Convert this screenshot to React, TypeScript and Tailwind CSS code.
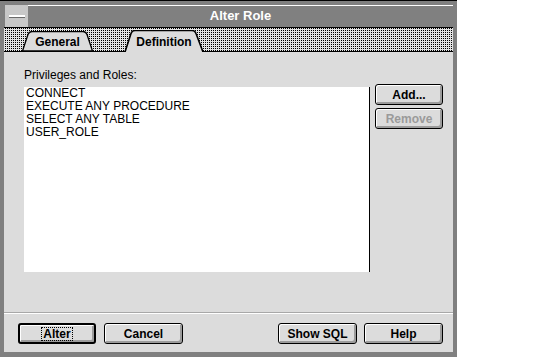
import React from "react";

const items = ["CONNECT", "EXECUTE ANY PROCEDURE", "SELECT ANY TABLE", "USER_ROLE"];

function Btn({
  label,
  w,
  disabled,
  isDefault,
}: {
  label: string;
  w: string;
  disabled?: boolean;
  isDefault?: boolean;
}) {
  return (
    <button
      type="button"
      className={
        "h-[21px] rounded-[3px] bg-[#dcdcdc] shadow-[inset_1px_1px_0_#fff,inset_-2px_-2px_0_#9c9c9c] flex items-center justify-center text-[12px] leading-[14px] font-bold " +
        w +
        (isDefault ? " border-2 border-black" : " border border-black") +
        (disabled ? " text-[#9a9a9a]" : " text-black")
      }
    >
      {isDefault ? (
        <span className="border border-dotted border-black px-[1px] leading-[12px]">{label}</span>
      ) : (
        label
      )}
    </button>
  );
}

function Tab({ label, active }: { label: string; active?: boolean }) {
  if (active) {
    return (
      <div className="relative z-10 -mb-px ml-[31px] h-[22px] w-[80px]">
        <svg className="absolute inset-0" width="80" height="22" viewBox="0 0 80 22">
          <path
            d="M1 22 L7 3.5 Q8 0.5 11 0.5 H68 Q71 0.5 72 3.5 L79 22 Z"
            fill="#dcdcdc"
            stroke="none"
          />
          <path
            d="M1 22 L7 3.5 Q8 0.5 11 0.5 H68 Q71 0.5 72 3.5 L79 22"
            fill="none"
            stroke="#000"
            strokeWidth="1.6"
          />
        </svg>
        <div className="relative pt-[5px] text-center text-[12px] leading-[14px] font-bold text-black">
          {label}
        </div>
      </div>
    );
  }
  return (
    <div className="relative ml-[18px] h-[20px] w-[71px]">
      <svg className="absolute inset-0" width="71" height="20" viewBox="0 0 71 20">
        <path
          d="M0.5 20 L6 3.5 Q7 0.5 10 0.5 H61 Q64 0.5 65 3.5 L70.5 20 Z"
          fill="#dcdcdc"
          stroke="#000"
          strokeWidth="1.3"
        />
      </svg>
      <div className="relative pt-[4px] text-center text-[12px] leading-[14px] font-bold text-black">
        {label}
      </div>
    </div>
  );
}

export default function App() {
  return (
    <div className="w-[536px] h-[359px] bg-white font-['Liberation_Sans',Arial,sans-serif]">
      <div className="w-[457px] h-[357px] bg-[#808080] border-t border-black flex flex-col">
        {/* title bar */}
        <div className="h-[26px] flex pl-[5px] pt-[4px] pr-[4px]">
          <div className="w-[23px] h-[22px] bg-[#c8c8c8] flex items-center justify-center">
            <div className="w-[16px] h-[3px] bg-white border-b border-[#6a6a6a]" />
          </div>
          <div className="flex-1 border-t border-white flex items-center justify-center pb-[1px] text-white text-[13px] font-bold">
            Alter Role
          </div>
        </div>

        <div className="flex-1 flex flex-col px-[4px] pb-[5px]">
          {/* tab strip */}
          <div className="h-[25px] border-y border-black flex items-end bg-[conic-gradient(#000_0_25%,#e4e4e4_0)] bg-[length:2px_2px]">
            <Tab label="General" />
            <Tab label="Definition" active />
          </div>

          {/* body */}
          <div className="flex-1 bg-[#dcdcdc] flex flex-col">
            <div className="pt-[16px] pl-[20px] text-[12px] leading-[14px] text-black">
              Privileges and Roles:
            </div>
            <div className="mt-[2px] flex pl-[20px]">
              <div className="mt-[3px] w-[346px] h-[185px] bg-white border-r border-black pl-[2px] text-[12px] leading-[13px] text-black">
                {items.map((it) => (
                  <div key={it}>{it}</div>
                ))}
              </div>
              <div className="ml-[5px] flex flex-col gap-[3px]">
                <Btn label="Add..." w="w-[68px]" />
                <Btn label="Remove" w="w-[68px]" disabled />
              </div>
            </div>
            <div className="mt-[40px] border-t border-[#a8a8a8] border-b border-b-white" />
            <div className="mt-[9px] flex pl-[14px] pr-[10px]">
              <Btn label="Alter" w="w-[78px]" isDefault />
              <div className="ml-[8px]">
                <Btn label="Cancel" w="w-[79px]" />
              </div>
              <div className="ml-auto flex gap-[7px]">
                <Btn label="Show SQL" w="w-[79px]" />
                <Btn label="Help" w="w-[79px]" />
              </div>
            </div>
          </div>
        </div>
      </div>
    </div>
  );
}
